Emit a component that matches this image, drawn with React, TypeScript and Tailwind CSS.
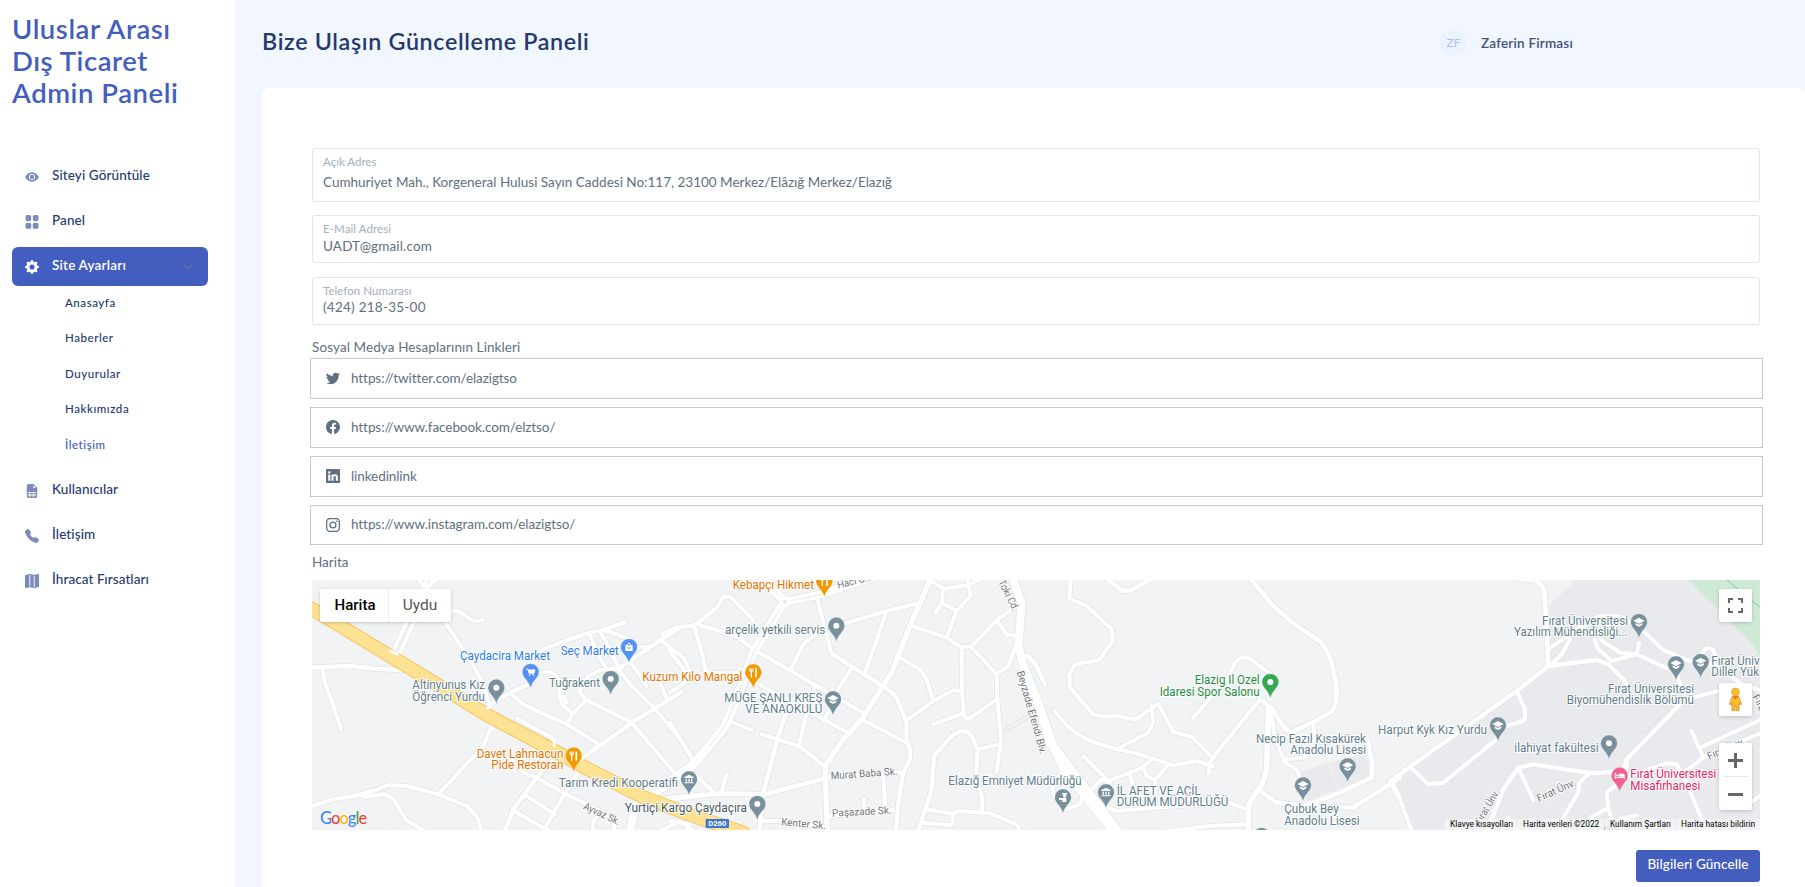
import React from "react";
import type { IconType } from "react-icons";
import {
  BsChevronDown,
  BsEyeFill,
  BsFacebook,
  BsFileEarmarkSpreadsheetFill,
  BsGearFill,
  BsInstagram,
  BsLinkedin,
  BsMapFill,
  BsTelephoneFill,
  BsTwitter,
} from "react-icons/bs";

/* ---------- Map data ---------- */

type Road = [d: string, width?: number];
type Kind = "dot" | "cart" | "bag" | "food" | "school" | "museum" | "police" | "bed";
type Pin = [x: number, y: number, kind: Kind, color: string];
type Label = [x: number, y: number, width: number, anchor: "start" | "end", color: string, text: string];
type Street = [x: number, y: number, width: number, angle: number, text: string];

interface Tile {
  offset: number;
  roads: Road[];
  pins: Pin[];
  labels: Label[];
  streets: Street[];
}

const SLATE = "#78909c";
const SLATE_TEXT = "#5f7d8c";
const BLUE = "#5491f5";
const BLUE_TEXT = "#2f7de9";
const ORANGE = "#f29900";
const ORANGE_TEXT = "#e37400";
const GREEN = "#34a853";
const GREEN_TEXT = "#1e8e3e";
const PINK = "#f06292";
const PINK_TEXT = "#e91e63";

const tiles: Tile[] = [
  {
    offset: -2,
    roads: [
      ["M355 0 L250 225"],
      ["M373 0 L268 235"],
      ["M318 0 L345 35 L395 0"],
      ["M392 120 L480 250 L520 325 L540 395"],
      ["M425 104 Q445 102 465 118 Q490 142 520 132"],
      ["M0 275 L120 270 L190 278 L285 283", 13],
      ["M37 278 L45 320 L70 390 L93 457"],
      ["M0 692 L70 670 L130 660 L190 645 L235 627 L290 630 L385 655 L470 690 L500 720 L515 765"],
      ["M185 645 L150 656 L165 663 L225 654 L250 668 L290 735 L345 765"],
      ["M545 450 L520 510 L385 655"],
      ["M535 395 L540 385 L600 350 L668 320"],
      ["M690 290 L720 288 Q745 295 750 330 Q745 375 762 392 L790 412"],
      ["M600 352 L640 385 L770 445 L868 505 L820 545"],
      ["M622 427 L665 452 L722 482 Q732 492 733 508"],
      ["M665 245 L700 220 L740 204 L830 172 L880 162 L945 138"],
      ["M880 162 L920 175 L960 190 L972 212 L1015 213"],
      ["M838 172 L862 230 L890 280"],
      ["M870 165 L900 220 L925 275"],
      ["M770 445 L790 412 L828 372 L808 345 L835 300 L870 282 L935 275"],
      ["M750 340 L770 380"],
      ["M925 280 L1040 200 L1115 152", 13],
      ["M965 262 L1010 330"],
      ["M925 280 L960 325 L1035 398 L1110 488 L1150 555"],
      ["M1052 325 L1072 370"],
      ["M820 545 L965 440 L1035 398 L1115 347", 13],
      ["M828 372 L965 440 L1110 610 L1140 650"],
      ["M1050 190 L1120 245 L1150 305"],
      ["M820 545 L720 560 L680 605 L610 700 L585 765", 13],
      ["M795 600 L760 660 L700 765"],
      ["M605 550 L640 590 L680 605 L760 650 L880 710 L910 735 L915 765"],
      ["M642 655 L735 715"],
      ["M612 705 L690 750 L720 765"],
      ["M850 765 Q845 735 860 725"],
      ["M980 680 L960 765", 24],
      ["M975 690 L1060 668 L1180 655", 12],
      ["M1040 770 L1110 735 L1150 765"],
    ],
    pins: [
      [559, 335, "dot", SLATE],
      [662, 288, "cart", BLUE],
      [957, 213, "bag", BLUE],
      [902, 309, "dot", SLATE],
      [791, 539, "food", ORANGE],
    ],
    labels: [
      [450, 252, 270, "start", BLUE_TEXT, "Çaydacira Market"],
      [752, 238, 174, "start", BLUE_TEXT, "Seç Market"],
      [525, 340, 218, "end", SLATE_TEXT, "Altinyunus Kız"],
      [525, 375, 218, "end", SLATE_TEXT, "Öğrenci Yurdu"],
      [870, 332, 153, "end", SLATE_TEXT, "Tuğrakent"],
      [760, 545, 260, "end", ORANGE_TEXT, "Davet Lahmacun"],
      [760, 579, 216, "end", ORANGE_TEXT, "Pide Restoran"],
    ],
    streets: [[818, 698, 118, 25, "Ayvaz Sk."]],
  },
  {
    offset: 358,
    roads: [
      ["M335 90 L250 230 L200 370 L165 450 L110 520 L60 575 L20 600 L-50 655", 27],
      ["M340 72 L270 0", 26],
      ["M355 76 L450 56 L620 0", 24],
      ["M440 62 L465 160 L485 233"],
      ["M485 233 L640 332 Q678 350 690 390 L710 440 L710 495 L720 520 L720 550 L700 590 L685 680 L678 765", 13],
      ["M-25 175 L20 155 L75 148 L140 95 L160 62 L180 62 L250 132"],
      ["M72 150 L98 240 L108 292 L215 292"],
      ["M90 148 L150 165 L205 185 L262 230"],
      ["M268 230 L440 330 L580 410"],
      ["M360 285 L400 205 L455 160"],
      ["M545 275 L505 340 L480 400 L460 435"],
      ["M525 142 L650 105 L745 82"],
      ["M650 105 L585 292"],
      ["M785 0 L720 150 L665 290 L575 430 L520 490 L465 570 L472 765", 16],
      ["M575 430 L710 500"],
      ["M435 330 L405 430 L387 512"],
      ["M250 315 L400 400 L460 430 L530 468"],
      ["M275 475 L390 512 L465 572"],
      ["M362 370 L325 480 L280 650 L268 765", 13],
      ["M175 435 L245 462"],
      ["M-50 675 L150 652 L285 655 L480 603 L690 590", 14],
      ["M170 595 L155 645"],
      ["M75 595 L130 648"],
      ["M0 440 L70 552"],
      ["M-5 220 L38 275 L60 310 L0 350"],
      ["M640 590 L645 695"],
      ["M582 668 L582 700"],
      ["M480 720 L670 702"],
      ["M280 735 L340 735 L475 755"],
      ["M780 12 L820 38 L895 28 L945 0"],
      ["M820 38 L815 80 L795 112"],
      ["M892 10 L902 60 L860 105 L818 82"],
      ["M860 105 L830 185"],
      ["M720 148 L830 185 L875 215 L905 210 L980 133 L1035 92"],
      ["M875 215 L876 340 L882 420 L895 430 L980 370"],
      ["M900 210 L980 295 L982 370 L993 490 L980 588"],
      ["M980 295 L1015 270 L1038 210"],
      ["M980 133 L1010 175 L1038 180"],
      ["M1025 0 L1055 80 L1045 210 L1060 270 L1110 400 L1140 505", 24],
      ["M1065 240 Q1095 250 1125 325"],
      ["M685 242 L750 280 L770 310 L790 375"],
      ["M708 435 L790 375 L850 343 L870 345"],
      ["M788 445 L880 412"],
      ["M745 765 L785 640 L792 540 L840 485 Q880 450 905 480 L923 520 L918 600 L937 670 L935 705", 13],
      ["M923 520 L985 505"],
      ["M770 700 L850 713 L865 705 L960 712 L1040 745 L1050 765"],
      ["M760 740 L845 748 L852 713"],
      ["M0 735 L60 745 L50 765"],
    ],
    pins: [
      [463, 15, "food", ORANGE],
      [499, 149, "dot", SLATE],
      [250, 289, "food", ORANGE],
      [489, 370, "school", SLATE],
      [57, 610, "museum", SLATE],
      [262, 684, "dot", SLATE],
    ],
    labels: [
      [188, 38, 244, "start", ORANGE_TEXT, "Kebapçı Hikmet"],
      [466, 173, 301, "end", SLATE_TEXT, "arçelik yetkili servis"],
      [217, 314, 300, "end", ORANGE_TEXT, "Kuzum Kilo Mangal"],
      [457, 377, 294, "end", SLATE_TEXT, "MÜGE ŞANLI KREŞ"],
      [457, 411, 231, "end", SLATE_TEXT, "VE ANAOKULU"],
      [24, 633, 358, "end", SLATE_TEXT, "Tarım Kredi Kooperatifi"],
      [231, 708, 367, "end", "#455a64", "Yurtiçi Kargo Çaydaçıra"],
    ],
    streets: [
      [505, 38, 105, -14, "Hacı O..."],
      [483, 610, 200, -4, "Murat Baba Sk."],
      [487, 722, 178, -3, "Paşazade Sk."],
      [333, 748, 134, 5, "Kenter Sk."],
      [984, 18, 100, 63, "Toki Cd."],
      [1040, 288, 258, 74, "Beyzade Efendi Blv."],
    ],
  },
  {
    offset: 718,
    roads: [
      ["M122 0 L118 68 L170 90 L245 160 L248 195 L208 252 L135 265 L118 295 L120 335 L190 415 L225 422 L260 420 L318 431 L385 382 L405 420 L430 468 L485 482 L548 545"],
      ["M222 0 L275 43 L300 45 L380 0", 14],
      ["M365 390 L370 440 L355 470 L260 520"],
      ["M75 405 Q110 460 170 490 Q230 515 310 530 L370 548 L430 568 L500 555 L550 570"],
      ["M535 592 L540 560 L560 530 L690 370", 13],
      ["M490 425 L590 310 L615 260 Q640 232 665 252 L720 292"],
      ["M655 0 L730 90 L800 150 L870 195 Q895 225 905 260 L920 330 Q920 400 900 410 L850 438 L785 468 Q760 465 730 400 L690 370", 14],
      ["M715 395 L710 580 Q700 625 685 640 Q655 680 655 700 L655 765", 17],
      ["M722 400 L735 485 L765 560 L800 580 L815 620"],
      ["M765 550 L820 545 Q860 520 850 440"],
      ["M160 540 L235 615 L330 578 L370 548"],
      ["M240 620 L215 610 L185 640"],
      ["M342 580 L350 600 L375 612 L410 572"],
      ["M375 612 L375 650"],
      ["M300 595 L310 630"],
      ["M-20 270 L20 370 L65 500 L100 575 L250 765", 27],
      ["M65 512 L85 520 L270 765", 14],
      ["M-5 240 L15 260 L45 325"],
      ["M95 590 L65 625 L70 655 L110 700 L150 685 L155 670"],
      ["M190 680 L260 705 L450 690 L600 680 L650 700"],
      ["M685 640 L740 680 L825 690 L930 650 L1025 605 L1027 560 L1012 490", 14],
      ["M825 690 L970 695 L1110 605", 13],
      ["M1082 612 L1110 665"],
      ["M415 765 L540 750 L650 745"],
    ],
    pins: [
      [721, 318, "dot", GREEN],
      [99, 664, "police", SLATE],
      [228, 649, "museum", SLATE],
      [953, 571, "school", SLATE],
      [819, 628, "school", SLATE],
      [695, 780, "dot", SLATE],
    ],
    labels: [
      [689, 325, 195, "end", GREEN_TEXT, "Elazig Il Ozel"],
      [689, 361, 300, "end", GREEN_TEXT, "Idaresi Spor Salonu"],
      [1008, 500, 330, "end", SLATE_TEXT, "Necip Fazıl Kısakürek"],
      [1008, 535, 227, "end", SLATE_TEXT, "Anadolu Lisesi"],
      [155, 628, 400, "end", SLATE_TEXT, "Elazığ Emniyet Müdürlüğü"],
      [260, 656, 252, "start", SLATE_TEXT, "İL AFET VE ACİL"],
      [260, 690, 335, "start", SLATE_TEXT, "DURUM MÜDÜRLÜĞÜ"],
      [763, 712, 163, "start", SLATE_TEXT, "Çubuk Bey"],
      [763, 747, 226, "start", SLATE_TEXT, "Anadolu Lisesi"],
    ],
    streets: [],
  },
  {
    offset: 1078,
    roads: [
      ["M370 6 L430 12 Q455 20 463 45 L470 160 L475 265", 14],
      ["M0 617 L60 572 L380 345 L475 270 L620 252 L655 265 L700 310 L710 325", 13],
      ["M480 215 L550 170 L600 130 Q650 112 700 125 L765 170 L820 222 L900 255 L985 270 L1050 322"],
      ["M480 270 L515 235 L540 190"],
      ["M613 190 L625 220 L665 255 L740 235"],
      ["M630 190 L690 230 L740 235 L860 290 L885 372 L1000 340"],
      ["M747 200 L740 235"],
      ["M930 245 Q945 205 970 222 L980 250"],
      ["M380 345 L405 400 L405 432 L345 452 L320 490 L160 620 L115 625 L60 572"],
      ["M0 617 L30 670 L65 765"],
      ["M870 385 L710 550 L700 580 Q640 595 590 590 L430 565 L385 575 L340 640 L290 765", 13],
      ["M385 575 L430 672"],
      ["M600 590 L568 620 L565 650 L495 765"],
      ["M712 555 L705 605 L650 650 L655 700 L680 765"],
      ["M705 605 L830 562 L860 565 L890 620 L950 765"],
      ["M600 725 L655 695"],
      ["M690 728 L742 718"],
      ["M355 725 L385 765"],
      ["M905 465 L940 545 L1115 470"],
      ["M930 515 L1115 430"],
      ["M870 590 L895 580 L940 545"],
      ["M1070 690 L1115 655"],
      ["M1050 322 L1115 345"],
    ],
    pins: [
      [747, 138, "school", SLATE],
      [858, 265, "school", SLATE],
      [932, 258, "school", SLATE],
      [324, 448, "school", SLATE],
      [657, 502, "dot", SLATE],
      [689, 599, "bed", PINK],
      [660, 770, "dot", "#b0bec5"],
    ],
    labels: [
      [714, 147, 258, "end", SLATE_TEXT, "Fırat Üniversitesi"],
      [712, 181, 340, "end", SLATE_TEXT, "Yazılım Mühendisliği..."],
      [964, 266, 145, "start", SLATE_TEXT, "Fırat Üniv"],
      [964, 301, 143, "start", SLATE_TEXT, "Diller Yük"],
      [912, 350, 258, "end", SLATE_TEXT, "Fırat Üniversitesi"],
      [912, 385, 382, "end", SLATE_TEXT, "Biyomühendislik Bölümü"],
      [291, 474, 327, "end", SLATE_TEXT, "Harput Kyk Kız Yurdu"],
      [626, 527, 253, "end", SLATE_TEXT, "ilahiyat fakültesi"],
      [721, 606, 258, "start", PINK_TEXT, "Fırat Üniversitesi"],
      [721, 641, 210, "start", PINK_TEXT, "Misafirhanesi"],
    ],
    streets: [
      [272, 748, 115, -60, "Fırat Ünv."],
      [446, 678, 124, -24, "Fırat Ünv."],
      [958, 552, 120, -24, "Fırat Ünv."],
      [1086, 362, 130, 62, "Fırat Ünv."],
    ],
  },
];

const HIGHWAY = "M-10 90 L5 98 L270 258 L540 422 L740 528 L820 572 L1000 664 L1110 705 L1180 730 L1300 770";

const frame = (offset: number) => `translate(${offset} -4) scale(0.33333)`;

function Glyph({ kind, color }: { kind: Kind; color: string }) {
  switch (kind) {
    case "cart":
      return (
        <g fill="none" stroke="#fff" strokeWidth={3}>
          <path d="M-14 -9 H-9 L-4 4 H9 L13 -6 H-8" />
          <path d="M-7 -5 H12 L9 3 H-4 Z" fill="#fff" />
          <circle cx={-3} cy={9} r={1.5} />
          <circle cx={8} cy={9} r={1.5} />
        </g>
      );
    case "bag":
      return (
        <g>
          <path d="M-11 -5 H11 V12 H-11 Z" fill="#fff" />
          <path d="M-5 -3 V-8 Q0 -15 5 -8 V-3" fill="none" stroke="#fff" strokeWidth={3} />
          <path d="M-5 1 Q0 8 5 1" fill="none" stroke={color} strokeWidth={2.5} />
        </g>
      );
    case "food":
      return (
        <g fill="none" stroke="#fff" strokeLinecap="round">
          <path d="M-6 -11 V14" strokeWidth={4} />
          <path d="M-11 -11 V-4 Q-6 0 -1 -4 V-11" strokeWidth={3} />
          <path d="M8 13 V-11" strokeWidth={5} />
        </g>
      );
    case "school":
      return (
        <g fill="#fff">
          <path d="M0 -13 L17 -4 L0 5 L-17 -4 Z" />
          <path d="M-10 3 L0 8 L10 3 V9 L0 14 L-10 9 Z" />
        </g>
      );
    case "museum":
      return (
        <g fill="#fff">
          <path d="M0 -14 L14 -7 V-4 H-14 V-7 Z" />
          <path d="M-10 -2 H-6 V7 H-10 Z M-2 -2 H2 V7 H-2 Z M6 -2 H10 V7 H6 Z M-14 9 H14 V12 H-14 Z" />
        </g>
      );
    case "police":
      return (
        <g fill="#fff">
          <path d="M-2 -13 H12 V-8 H-2 Z" />
          <circle cx={5} cy={-4} r={5} />
          <path d="M-12 2 H10 V14 H-2 V8 H-12 Z" />
        </g>
      );
    case "bed":
      return (
        <g fill="#fff">
          <path d="M-15 -9 H-12 V4 H12 V-1 H15 V10 H12 V7 H-12 V10 H-15 Z" />
          <circle cx={-7} cy={-1} r={3.5} />
          <path d="M-2 -6 H11 Q15 -6 15 -1 V3 H-2 Z" />
        </g>
      );
    default:
      return <circle r={9} fill="#fff" />;
  }
}

function MapCanvas() {
  return (
    <svg
      className="block h-full w-full"
      viewBox="0 0 1448 250"
      preserveAspectRatio="xMinYMin slice"
      fontFamily='Roboto, "Liberation Sans", sans-serif'
    >
      <rect width={1448} height={250} fill="#f1f3f4" />
      <g transform={frame(1078)}>
        <path d="M560 10 L475 90 V270 L380 345 L60 572 L0 617 L62 770 H1115 V0 H570 Z" fill="#e8eaed" />
        <path d="M893 10 L1060 175 Q1095 210 1112 250 V10 Z" fill="#ceead6" />
        <path d="M1008 10 L1112 95" stroke="#81c995" strokeWidth={3} />
      </g>
      <g transform={frame(718)} fill="#e8eaed">
        <path d="M800 590 L1005 530 L1025 600 L830 675 Z" />
        <path d="M895 560 L925 635" stroke="#f1f3f4" strokeWidth={3} />
      </g>
      <path
        d="M73.5 0 V250 M286.5 0 V250 M500.5 0 V250 M713.5 0 V250 M926.5 0 V250 M1140.5 0 V250 M0 152.5 H1448"
        stroke="#000"
        strokeOpacity={0.015}
      />
      <g fill="none" strokeLinecap="round" strokeLinejoin="round">
        <path d="M1010 460 L1090 412" transform={frame(358)} stroke="#dfe2e5" strokeWidth={14} />
        <path d="M1010 460 L1090 412" transform={frame(358)} stroke="#f1f3f4" strokeWidth={9} />
        {tiles.map((t) => (
          <g key={t.offset} transform={frame(t.offset)} stroke="#e3e6e9">
            {t.roads.map(([d, w = 12]) => (
              <path key={d} d={d} strokeWidth={w + 5} />
            ))}
          </g>
        ))}
        {tiles.map((t) => (
          <g key={t.offset} transform={frame(t.offset)} stroke="#fff">
            {t.roads.map(([d, w = 12]) => (
              <path key={d} d={d} strokeWidth={w} />
            ))}
          </g>
        ))}
        <g transform={frame(358)} stroke="#e3e6e9" strokeWidth={2.5}>
          <path d="M330 98 L250 230 L200 370 L165 450 L115 515" />
          <path d="M363 74 L450 57" />
          <path d="M335 66 L280 12" />
          <circle cx={345} cy={78} r={11} stroke="#fff" strokeWidth={10} fill="#e3e6e9" />
        </g>
        <g transform={frame(-2)}>
          <path d={HIGHWAY} stroke="#f5bf4f" strokeWidth={42} />
          <path d={HIGHWAY} stroke="#fde293" strokeWidth={37} />
          <path
            d="M243 226 L262 234 M533 396 L541 386 M541 452 L548 458 M732 508 L735 498 M800 594 L796 606 M820 545 L812 550"
            stroke="#fff"
            strokeWidth={10}
          />
        </g>
      </g>
      <g transform={frame(358)}>
        <rect x={107} y={729} width={70} height={27} rx={3} fill="#3f76d8" />
        <text x={142} y={751} textAnchor="middle" fill="#fff" fontSize={23} fontWeight={700} textLength={54}>
          D260
        </text>
      </g>
      {tiles.map((t) => (
        <g key={t.offset} transform={frame(t.offset)}>
          {t.streets.map(([x, y, w, a, text]) => (
            <text
              key={`${x}-${y}`}
              transform={`translate(${x} ${y}) rotate(${a})`}
              textLength={w}
              lengthAdjust="spacingAndGlyphs"
              fontSize={31}
              fill="#70757a"
              stroke="#fff"
              strokeWidth={5}
              paintOrder="stroke"
            >
              {text}
            </text>
          ))}
          {t.pins.map(([x, y, kind, color]) => (
            <g key={`${x}-${y}`} transform={`translate(${x} ${y})`}>
              <path
                d="M0 -25 A25 25 0 0 1 25 0 C25 17 6 24 0 48 C-6 24 -25 17 -25 0 A25 25 0 0 1 0 -25 Z"
                fill={color}
                stroke="#fff"
                strokeOpacity={0.6}
                strokeWidth={1.5}
              />
              <Glyph kind={kind} color={color} />
            </g>
          ))}
        </g>
      ))}
      {tiles.map((t) => (
        <g key={t.offset} transform={frame(t.offset)}>
          {t.labels.map(([x, y, w, anchor, color, text]) => (
            <text
              key={`${x}-${y}`}
              x={x}
              y={y}
              textAnchor={anchor}
              textLength={w}
              lengthAdjust="spacingAndGlyphs"
              fontSize={37}
              fill={color}
              stroke="#fff"
              strokeWidth={6}
              strokeLinejoin="round"
              paintOrder="stroke"
            >
              {text}
            </text>
          ))}
        </g>
      ))}
    </svg>
  );
}

function Pegman() {
  return (
    <svg className="h-[25px] w-[15px]" viewBox="0 0 16 26">
      <path
        d="M4.5 9.5 H11.5 L14.5 18 L12.6 18.6 L11.8 17 V25 H8.6 V20 H7.4 V25 H4.2 V17 L3.4 18.6 L1.5 18 Z"
        fill="#fbbc2d"
        stroke="#b77a18"
        strokeWidth={0.6}
      />
      <path d="M5 9.5 L8 13 L11 9.5 Z" fill="#e8642b" />
      <circle cx={8} cy={5} r={4.2} fill="#fbbc2d" stroke="#d99a1f" strokeWidth={0.6} />
    </svg>
  );
}

function MapPanel() {
  return (
    <div className="relative h-[250px] shrink-0 overflow-hidden font-[Roboto,'Liberation_Sans',sans-serif]">
      <MapCanvas />
      <div className="absolute left-2 top-[9px] flex h-[33px] rounded-xs bg-white shadow-[0_1px_4px_-1px_rgba(0,0,0,0.3)]">
        <div className="flex w-[69px] items-center justify-center border-r border-[#ececec] pl-0.5 text-[15px] font-medium text-black">
          Harita
        </div>
        <div className="flex w-[62px] items-center justify-center text-[15.5px] text-[#565656]">Uydu</div>
      </div>
      <div className="absolute bottom-0.5 left-2 flex text-[16.5px] font-medium leading-5 tracking-[-1px] font-[Lato,sans-serif] [text-shadow:0_0_2px_#fff]">
        <span className="text-[#4285f4]">G</span>
        <span className="text-[#ea4335]">o</span>
        <span className="text-[#fbbc04]">o</span>
        <span className="text-[#4285f4]">g</span>
        <span className="text-[#34a853]">l</span>
        <span className="text-[#ea4335]">e</span>
      </div>
      <div className="absolute right-2 top-[9px] flex size-[33px] items-center justify-center rounded-xs bg-white shadow-[0_1px_4px_-1px_rgba(0,0,0,0.3)]">
        <svg className="size-[15px]" viewBox="0 0 15 15" fill="none" stroke="#666" strokeWidth={2}>
          <path d="M1 5 V1 H5 M10 1 H14 V5 M14 10 V14 H10 M5 14 H1 V10" />
        </svg>
      </div>
      <div className="absolute right-2 top-[103px] flex size-[33px] items-center justify-center rounded-xs bg-white shadow-[0_1px_4px_-1px_rgba(0,0,0,0.3)]">
        <Pegman />
      </div>
      <div className="absolute right-2 top-[163px] flex h-[67px] w-[33px] flex-col items-center rounded-xs bg-white shadow-[0_1px_4px_-1px_rgba(0,0,0,0.3)]">
        <svg className="h-[33px] w-[15px]" viewBox="0 0 15 33" stroke="#666" strokeWidth={3}>
          <path d="M0 17.5 H15 M7.5 10 V25" />
        </svg>
        <span className="h-px w-[25px] bg-[#e6e6e6]" />
        <svg className="h-[33px] w-[15px]" viewBox="0 0 15 33" stroke="#666" strokeWidth={3}>
          <path d="M0 17.5 H15" />
        </svg>
      </div>
      <div className="absolute bottom-0 right-0 flex h-[11px] items-center gap-px whitespace-nowrap text-[8.3px] leading-[11px] text-black">
        <span className="w-[71px] bg-[#f5f5f5]/75 pl-[5px]">Klavye kısayolları</span>
        <span className="w-[87px] bg-[#f5f5f5]/75 pl-[6px]">Harita verileri ©2022</span>
        <span className="w-[71px] bg-[#f5f5f5]/75 pl-[5px]">Kullanım Şartları</span>
        <span className="w-[83px] bg-[#f5f5f5]/75 pl-[4px]">Harita hatası bildirin</span>
      </div>
    </div>
  );
}

/* ---------- Sidebar ---------- */

type IconLike = IconType | React.ComponentType<{ className?: string }>;

function NavItem({ icon: Icon, label }: { icon: IconLike; label: string }) {
  return (
    <a className="flex h-[39px] items-center pl-[13px] text-[13.5px] font-medium tracking-[0.1px] text-[#25396f]">
      <Icon className="mr-[13px] size-[14px] text-[#7c8bbb]" />
      <span className="-mt-[3px]">{label}</span>
    </a>
  );
}

function SubItem({ label, active = false }: { label: string; active?: boolean }) {
  return (
    <a
      className={
        active
          ? "flex h-[35.5px] items-center pl-[53px] pt-px text-[11.5px] font-medium tracking-[0.55px] text-[#4059c0]"
          : "flex h-[35.5px] items-center pl-[53px] pt-px text-[11.5px] font-medium tracking-[0.55px] text-[#25396f]"
      }
    >
      {label}
    </a>
  );
}

function GridIcon({ className }: { className?: string }) {
  return (
    <svg className={className} viewBox="0 0 13 13" fill="currentColor">
      <rect x={0.5} y={0} width={5.2} height={5.5} rx={1.4} />
      <rect x={7.3} y={0} width={5.2} height={5.5} rx={1.4} />
      <rect x={0.5} y={7.3} width={5.2} height={5.5} rx={1.4} />
      <rect x={7.3} y={7.3} width={5.2} height={5.5} rx={1.4} />
    </svg>
  );
}

function Sidebar() {
  return (
    <aside className="w-[235px] shrink-0 bg-white pl-3 pr-[27px] pt-[13px]">
      <h1 className="w-[200px] text-[27.5px] font-semibold leading-8 tracking-[0.55px] text-[#435ebe]">
        Uluslar Arası
        <br />
        Dış Ticaret
        <br />
        Admin Paneli
      </h1>
      <nav className="mt-12 flex flex-col gap-1.5">
        <NavItem icon={BsEyeFill} label="Siteyi Görüntüle" />
        <NavItem icon={GridIcon} label="Panel" />
        <a className="flex h-[39px] items-center rounded-md bg-[#435ebe] pl-[13px] pr-[15px] text-[13.5px] font-semibold tracking-[0.2px] text-white">
          <BsGearFill className="mr-[13px] size-[14px]" />
          <span className="-mt-[3px] flex-1">Site Ayarları</span>
          <BsChevronDown className="size-[10px] stroke-[0.6] text-[#717c9c]" />
        </a>
        <div className="-mt-2 flex h-[181px] flex-col">
          <SubItem label="Anasayfa" />
          <SubItem label="Haberler" />
          <SubItem label="Duyurular" />
          <SubItem label="Hakkımızda" />
          <SubItem label="İletişim" active />
        </div>
        <NavItem icon={BsFileEarmarkSpreadsheetFill} label="Kullanıcılar" />
        <NavItem icon={BsTelephoneFill} label="İletişim" />
        <NavItem icon={BsMapFill} label="İhracat Fırsatları" />
      </nav>
    </aside>
  );
}

/* ---------- Form ---------- */

function SocialField({ icon: Icon, value, last = false }: { icon: IconType; value: string; last?: boolean }) {
  return (
    <div
      className={
        last
          ? "flex h-10 items-center border border-[#c9c9c9] pl-[15px]"
          : "mb-2 flex h-[41px] items-center border border-[#c9c9c9] pl-[15px]"
      }
    >
      <Icon className="-mt-px mr-[11px] size-[14px] text-[#607080]" />
      <span className="-mt-px text-[#607080]">{value}</span>
    </div>
  );
}

export default function App() {
  return (
    <div className="flex h-[887px] overflow-hidden bg-[#f2f7ff] text-[13.5px] text-[#607080] font-[Lato,'Open_Sans',sans-serif]">
      <Sidebar />
      <main className="flex min-w-0 flex-1 flex-col pl-[27px]">
        <header className="flex h-[88px] shrink-0 items-start justify-between">
          <h2 className="pt-[25px] text-[23.3px] font-semibold leading-8 tracking-[0.66px] text-[#25396f]">
            Bize Ulaşın Güncelleme Paneli
          </h2>
          <div className="mr-[232px] flex items-center pt-[29px]">
            <span className="mr-[14px] flex size-[27px] items-center justify-center rounded-full bg-[#ebf3ff] text-[12px] text-[#a9bbf7]">
              ZF
            </span>
            <span className="pt-px font-semibold tracking-[0.2px] text-[#435180]">Zaferin Firması</span>
          </div>
        </header>

        <section className="flex flex-1 flex-col rounded-t-lg bg-white pl-[50px] pr-[45px] pt-[60px]">
          <div className="h-[54px] rounded-[3px] border border-[#dce7f1] px-2.5 pt-1">
            <label className="block text-[11.5px] leading-[17px] text-[#a5aeb8]">Açık Adres</label>
            <p className="mt-[2px] leading-5">
              Cumhuriyet Mah., Korgeneral Hulusi Sayın Caddesi No:117, 23100 Merkez/Elâzığ Merkez/Elazığ
            </p>
          </div>
          <div className="mt-[13px] h-12 rounded-[3px] border border-[#dce7f1] px-2.5 pt-[4px]">
            <label className="block text-[11.5px] leading-[17px] tracking-[0.08px] text-[#a5aeb8]">E-Mail Adresi</label>
            <p className="leading-[18px] tracking-[0.15px]">UADT@gmail.com</p>
          </div>
          <div className="mt-[14px] h-12 rounded-[3px] border border-[#dce7f1] px-2.5 pt-[4px]">
            <label className="block text-[11.5px] leading-[17px] tracking-[0.05px] text-[#a5aeb8]">
              Telefon Numarası
            </label>
            <p className="-mt-px leading-[18px] tracking-[0.25px]">(424) 218-35-00</p>
          </div>

          <p className="mt-[13px] h-5 leading-[18px] tracking-[0.1px]">Sosyal Medya Hesaplarının Linkleri</p>
          <div className="-ml-[2px] -mr-[3px] tracking-[-0.08px]">
            <SocialField icon={BsTwitter} value="https://twitter.com/elazigtso" />
            <SocialField icon={BsFacebook} value="https://www.facebook.com/elztso/" />
            <SocialField icon={BsLinkedin} value="linkedinlink" />
            <SocialField icon={BsInstagram} value="https://www.instagram.com/elazigtso/" last />
          </div>

          <p className="mb-2 mt-[7px] leading-5">Harita</p>
          <MapPanel />

          <button className="mt-5 h-8 w-[124px] shrink-0 self-end rounded-[3px] bg-[#435ebe] pb-[3px] font-medium tracking-[0.1px] text-white">
            Bilgileri Güncelle
          </button>
        </section>
      </main>
    </div>
  );
}
